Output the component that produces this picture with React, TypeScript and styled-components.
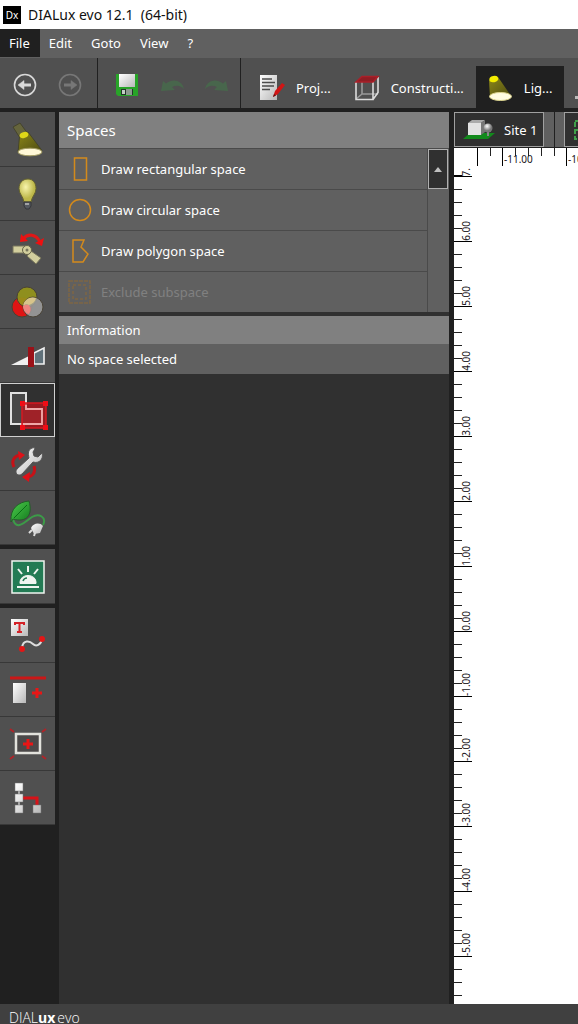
import React from 'react';
import styled, { createGlobalStyle, css } from 'styled-components';

const Global = createGlobalStyle`
  * { box-sizing: border-box; }
  html, body { margin: 0; background: #202020; }
  body { font-family: "Noto Sans", "Open Sans", sans-serif; font-size: 13px; color: #fff; }
  button { font: inherit; color: inherit; border: 0; padding: 0; background: none; cursor: pointer; }
  svg { display: block; flex: none; }
  ul { list-style: none; margin: 0; padding: 0; }
`;

const Window = styled.div`
  display: flex;
  flex-direction: column;
  height: 100vh;
  overflow: hidden;
`;

const TitleBar = styled.header`
  flex: none;
  display: flex;
  align-items: center;
  gap: 7px;
  height: 29px;
  padding-left: 3px;
  background: #fff;
  color: #111;
`;

const AppBadge = styled.span`
  display: flex;
  align-items: center;
  justify-content: center;
  width: 18px;
  height: 18px;
  background: #000;
  color: #fff;
  font-size: 10px;
`;

const Title = styled.h1`
  margin: 0;
  font: 400 14px/20px "Noto Sans", sans-serif;
  white-space: pre;
`;

const MenuBar = styled.nav`
  flex: none;
  display: flex;
  height: 29px;
  padding-bottom: 1px;
  background: #606060;
`;

const MenuItem = styled.button<{ $active?: boolean }>`
  padding: 0 10px 0 9px;
  background: ${p => (p.$active ? '#202020' : 'transparent')};
`;

const Toolbar = styled.div`
  flex: none;
  display: flex;
  height: 50px;
  background: #505050;
  overflow: hidden;
`;

const ToolGroup = styled.div<{ $start: number; $end: number }>`
  flex: none;
  display: flex;
  align-items: center;
  gap: 21px;
  padding: 4px ${p => p.$end}px 0 ${p => p.$start}px;
  border-right: 1px solid #202020;
`;

const ModeTabs = styled.div`
  flex: none;
  display: flex;
  align-items: flex-end;
  padding-left: 7px;
`;

const ModeTab = styled.button<{ $active?: boolean }>`
  flex: none;
  display: flex;
  align-items: center;
  gap: 11px;
  height: 42px;
  padding: 2px 12px 0 11px;
  background: ${p => (p.$active ? '#202020' : 'transparent')};
  white-space: nowrap;
`;

const Main = styled.main`
  flex: 1;
  min-height: 0;
  display: flex;
  margin-top: 4px;
`;

const Rail = styled.aside`
  flex: none;
  display: flex;
  flex-direction: column;
  gap: 4px;
  width: 59px;
  padding-right: 4px;
`;

const RailGroup = styled.div`
  padding-top: 1px;
  background: #505050;
`;

const RailButton = styled.button<{ $active?: boolean }>`
  display: flex;
  align-items: center;
  justify-content: center;
  width: 55px;
  height: 54px;
  border-bottom: 1px solid #383838;
  ${p => p.$active && css`
    background: #303030;
    border: 1px solid #d0d0d0;
  `}
`;

const SidePanel = styled.section`
  flex: none;
  display: flex;
  flex-direction: column;
  gap: 4px;
  width: 390px;
  background: #303030;
`;

const Card = styled.section`
  background: #606060;
`;

const CardTitle = styled.h2<{ $large?: boolean }>`
  margin: 0;
  padding-left: 8px;
  background: #808080;
  font-weight: 400;
  font-size: ${p => (p.$large ? 15 : 13)}px;
  line-height: ${p => (p.$large ? 36 : 28)}px;
`;

const CardText = styled.p`
  margin: 0;
  padding-left: 8px;
  line-height: 30px;
`;

const ListArea = styled.div`
  display: flex;
`;

const ToolList = styled.ul`
  flex: 1;
  border-right: 1px solid #4a4a4a;
`;

const ToolRow = styled.button`
  display: flex;
  align-items: center;
  gap: 9px;
  width: 100%;
  height: 41px;
  padding-left: 9px;
  border-top: 1px solid #4a4a4a;
  text-align: left;
  &:disabled { color: #808080; cursor: default; }
`;

const ScrollTrack = styled.div`
  width: 21px;
  border-top: 1px solid #4a4a4a;
`;

const ScrollUp = styled.button`
  display: flex;
  align-items: center;
  justify-content: center;
  width: 20px;
  height: 40px;
  border: 1px solid #b0b0b0;
  background: #303030;
`;

const Workspace = styled.section`
  flex: 1;
  min-width: 0;
  display: flex;
  flex-direction: column;
  margin-left: 5px;
  background: #fff;
  overflow: hidden;
`;

const ViewTabs = styled.div`
  flex: none;
  display: flex;
  height: 36px;
  background: #606060;
  border-bottom: 1px solid #202020;
`;

const ViewTab = styled.button`
  flex: none;
  display: flex;
  align-items: center;
  gap: 9px;
  padding: 0 6px 0 8px;
  border: 1px solid #a0a0a0;
  background: #303030;
  white-space: nowrap;
`;

const Divider = styled.span`
  flex: none;
  width: 11px;
  margin-right: 9px;
  border-right: 1px solid #202020;
`;

const TopRuler = styled.div`
  flex: none;
  display: flex;
  height: 19px;
  padding-left: 23px;
  color: #201420;
  font-size: 10px;
`;

const TopUnit = styled.div<{ $width: number }>`
  flex: none;
  width: ${p => p.$width}px;
  height: 18px;
  padding: 6px 0 0 1px;
  border-left: 1px solid #000;
  background: repeating-linear-gradient(90deg, transparent 0 12px, #222 12px 13px) 0 0 / 100% 8px no-repeat;
  line-height: 11px;
`;

const SideRuler = styled.div`
  flex: 1;
  min-height: 0;
  width: 18px;
  overflow: hidden;
  color: #201420;
  font-size: 10px;
`;

const SideUnit = styled.div<{ $first?: boolean; $bare?: boolean }>`
  display: flex;
  align-items: flex-start;
  justify-content: flex-end;
  flex-direction: column;
  height: ${p => (p.$first ? 10 : 65)}px;
  padding-left: 6px;
  border-bottom: ${p => (p.$bare ? 0 : 1)}px solid #000;
  background: ${p => p.$first ? 'linear-gradient(#000, #000) 0 100% / 8px 1px no-repeat' : 'repeating-linear-gradient(180deg, transparent 0 12px, #222 12px 13px) 0 0 / 8px 100% no-repeat'};
`;

const SideLabel = styled.span`
  writing-mode: vertical-rl;
  transform: rotate(180deg);
  line-height: 12px;
`;

const FirstUnits = styled.div`
  display: flex;
  flex-direction: column;
  justify-content: flex-end;
  height: 10px;
`;

const Footer = styled.footer`
  flex: none;
  height: 20px;
  padding: 4px 9px 0;
  background: #404040;
  overflow: hidden;
  font: 300 14px/20px "Open Sans", sans-serif;
  b { margin-right: 2px; font-weight: 700; }
`;

const Defs = () => (
  <svg width="0" height="0" style={{ position: 'absolute' }} aria-hidden="true">
    <defs>
      <linearGradient id="silver" x1="0" y1="0" x2="1" y2="1"><stop stopColor="#fff" /><stop offset="1" stopColor="#b8b8b8" /></linearGradient>
      <linearGradient id="beam" x1="0" y1="0" x2="1" y2="1"><stop stopColor="#8d8818" /><stop offset="1" stopColor="#4c4a12" /></linearGradient>
      <radialGradient id="glow" cx=".4" cy=".35"><stop stopColor="#f8f5ac" /><stop offset="1" stopColor="#bdb74a" /></radialGradient>
      <radialGradient id="ball" cx=".4" cy=".3"><stop stopColor="#fff" /><stop offset="1" stopColor="#777" /></radialGradient>
      <linearGradient id="leaf" x1="0" y1="0" x2="1" y2="1"><stop stopColor="#4cd04c" /><stop offset="1" stopColor="#14781e" /></linearGradient>
    </defs>
  </svg>
);

const Arrow = ({ dim, flip }: { dim?: boolean; flip?: boolean }) => (
  <svg width="24" height="24" viewBox="0 0 24 24" fill="none" stroke={dim ? '#777' : '#d8d8d8'} strokeWidth="1.6">
    <circle cx="12" cy="12" r="10.5" />
    <g transform={flip ? 'matrix(-1 0 0 1 24 0)' : undefined}>
      <path d="M18 12H9" strokeWidth="3" /><path d="M11 7.5 5 12l6 4.500Z" fill={dim ? '#777' : '#d8d8d8'} strokeWidth=".5" />
    </g>
  </svg>
);

const Save = () => (
  <svg width="24" height="24" viewBox="0 0 24 24">
    <path d="M1 1h22v22H3l-2-2Z" fill="#28a428" />
    <path d="M4 1h16v13H4Z" fill="url(#silver)" />
    <path d="M6 16h12v6H6Z" fill="#24352a" /><path d="M11 16h6v6h-6Z" fill="#8d9a90" /><path d="M7 17h3v4H7Z" fill="#c3ccc5" />
  </svg>
);

const Undo = ({ flip }: { flip?: boolean }) => (
  <svg width="24" height="16" viewBox="0 0 24 16">
    <g transform={flip ? 'matrix(-1 0 0 1 24 0)' : undefined}>
      <path d="M1 14 3 4l3 2.500C13 1 22 3 24 12c-4-4-8-4-12-2l3 3Z" fill="#48664c" />
    </g>
  </svg>
);

const Document = () => (
  <svg width="26" height="28" viewBox="0 0 26 28">
    <path d="M1 1h17v25H1Z" fill="url(#silver)" />
    <path d="M3 5h10M3 8.500h13M3 12h12M3 15.500h8" stroke="#4c4c4c" strokeWidth="1.4" />
    <path d="m23 9 3 2-7 9-5 3 2-6Z" fill="#d01515" /><path d="m15 20-1 3 3-1.500Z" fill="#631010" />
  </svg>
);

const Cube = () => (
  <svg width="26" height="28" viewBox="0 0 26 28" fill="none" stroke="#dcdcdc" strokeWidth="1.6">
    <path d="M8 8v12l-6 5M8 20h16" stroke="#999" />
    <path d="M2 8v17.500h17V8m0 17.500 5-7V3" />
    <path d="M2 8 8 2.500h16L19 8Z" fill="#8f1d24" stroke="#a91f28" />
  </svg>
);

const Spot = () => (
  <svg width="26" height="28" viewBox="0 0 26 28">
    <path d="M2 6 11 3l13 19-21 2Z" fill="url(#beam)" />
    <ellipse cx="7" cy="5" rx="4.500" ry="3.200" fill="#f4ec00" transform="rotate(-12 7 6)" />
    <ellipse cx="13.500" cy="22.500" rx="11" ry="4" fill="#fffce0" stroke="#ddd58e" />
  </svg>
);

const Luminaire = () => (
  <svg width="34" height="38" viewBox="0 0 34 38">
    <path d="m2 6 7-4 8 11-8 4Z" fill="#66653c" stroke="#45442c" />
    <path d="M8.500 15.500 17 11l14 18.500-24 2Z" fill="url(#beam)" stroke="#45442c" />
    <ellipse cx="13" cy="14" rx="4.500" ry="3" fill="#e0d818" transform="rotate(-20 13 14)" />
    <ellipse cx="19" cy="31" rx="12" ry="3.800" fill="#fff8d8" stroke="#a29b62" />
  </svg>
);

const Bulb = () => (
  <svg width="24" height="34" viewBox="0 0 24 34">
    <path d="M12 2C6 2 3 6.500 3 11.500 3 17 7 19 8 25h7c1-6 5-8 5-13.500C20 6.500 17.500 2 12 2Z" fill="url(#glow)" stroke="#65632f" />
    <path d="M8 25h7v4l-2 3h-3l-2-3Z" fill="#555960" stroke="#34363a" /><path d="M9 27h4" stroke="#bbb" strokeWidth="1.500" />
  </svg>
);

const Joint = () => (
  <svg width="36" height="34" viewBox="0 0 36 34">
    <path d="M13 8C18 2 26 3 30 11" fill="none" stroke="#e01818" strokeWidth="3" />
    <path d="m11 3-1 8 8-1Zm14 9 7 3 2-8Z" fill="#ee1010" />
    <path d="M3 15h12v7H3Zm18 5 10 7-5 6-9-8Z" fill="#d2ce9d" stroke="#77755c" />
    <circle cx="17" cy="19" r="4.500" fill="#d2ce9d" stroke="#646248" /><circle cx="17" cy="19" r="1.500" fill="#77755c" />
  </svg>
);

const Colors = () => (
  <svg width="36" height="34" viewBox="0 0 36 34" stroke="#4a4232">
    <circle cx="12" cy="22" r="10" fill="#e01414" />
    <circle cx="17" cy="12" r="10" fill="#95951a" opacity=".92" />
    <circle cx="23" cy="22" r="10" fill="#a4a4a4" opacity=".8" />
    <path d="M13 21c1-6 6-10 13-8-1 4-4 6-7 7-2-1-4-1-6 1Z" fill="#d8c48a" stroke="none" />
    <path d="M13 21c2-2 5-1 6-1 2 3 2 6 0 9-4-1-6-4-6-8Z" fill="#ee8580" stroke="none" />
  </svg>
);

const Dimmer = () => (
  <svg width="36" height="26" viewBox="0 0 36 26">
    <path d="m1 22 18-9v9Z" fill="#f0f0f0" /><path d="m24 10 10-5v16H24Z" fill="#60717a" stroke="#f0f0f0" strokeWidth="1.600" />
    <path d="M18 4h6v20h-6Z" fill="#9b1118" />
  </svg>
);

const SpacesIcon = () => (
  <svg width="40" height="40" viewBox="0 0 40 40">
    <path d="M3 3h15v16h16v15H3Z" fill="#484848" stroke="#e2e2e2" strokeWidth="2" />
    <path d="M14 13h24v25H14Z" fill="#c0141c" fillOpacity=".72" stroke="#d61820" strokeWidth="1.500" />
    <path d="M18 15v4h16v15H15" fill="none" stroke="#f0a8a8" strokeWidth="1.800" />
    <path d="M12 11h5v5h-5Zm23 0h5v5h-5ZM12 35h5v5h-5Zm23 0h5v5h-5Z" fill="#f00d16" />
  </svg>
);

const Wrench = () => (
  <svg width="36" height="38" viewBox="0 0 36 38">
    <path d="M4 22c-3-6 0-11 6-12M24 21c2 6-1 11-8 11" fill="none" stroke="#c51218" strokeWidth="3" />
    <path d="m8 6 7 4-6 5ZM20 27l-8 5 7 5Z" fill="#de1118" />
    <path d="M22 3c4-1 3 1 1 4l1 4 4 1 4-4c2 6-3 11-9 9L12 29c-4 3-8-1-5-5l12-11c-1-5-1-8 3-10Z" fill="url(#silver)" stroke="#555" />
  </svg>
);

const Eco = () => (
  <svg width="36" height="38" viewBox="0 0 36 38">
    <path d="M3 20c3 13 13 2 19-2 7-4 15 0 11 8" fill="none" stroke="#3c9b48" strokeWidth="2" />
    <path d="M1 22C0 10 8 3 19 2c4 14-2 22-16 18l-2 3Z" fill="url(#leaf)" stroke="#245c29" />
    <path d="M4 19 17 6" stroke="#087015" />
    <path d="M21 29c2-5 9-6 12-2l-3 7-6 1Z" fill="url(#silver)" /><path d="m22 31-3 3m6 0-1 3" stroke="#ddd" strokeWidth="2" />
  </svg>
);

const Alarm = () => (
  <svg width="34" height="34" viewBox="0 0 34 34" fill="none" stroke="#f0f5f0" strokeWidth="2">
    <path d="M1 1h32v32H1Z" fill="#237b54" strokeWidth="1.500" />
    <path d="M6 27h22" /><path d="M9 23.500V22a8 6.500 0 0 1 16 0v1.500Z" fill="#f0f5f0" strokeWidth="1" />
    <path d="M17 6v6M7 9l4 5M27 9l-4 5" /><path d="M12 21q1-3 4-3" stroke="#237b54" strokeWidth="1.500" />
  </svg>
);

const TextLine = () => (
  <svg width="36" height="36" viewBox="0 0 36 36">
    <path d="M1 1h17v17H1Z" fill="url(#silver)" />
    <path d="M5 7V5h9v2M9.500 5v9M7 14h5" fill="none" stroke="#d42127" strokeWidth="2" />
    <path d="M12 30c1-9 8-7 11-4s8 1 9-5" fill="none" stroke="#ddd" strokeWidth="2" />
    <circle cx="12" cy="31" r="3" fill="#e31616" /><circle cx="32" cy="21" r="3" fill="#e31616" />
  </svg>
);

const Plus = ({ x, y }: { x: number; y: number }) => <path d={`M${x - 5} ${y}h10M${x} ${y - 5}v10`} stroke="#e81616" strokeWidth="3" />;

const AddColumn = () => (
  <svg width="38" height="30" viewBox="0 0 38 30">
    <path d="M1 3h36" stroke="#ca1717" strokeWidth="3" /><path d="M4 8h13v20H4Z" fill="url(#silver)" /><Plus x={28} y={18} />
  </svg>
);

const AddFrame = () => (
  <svg width="38" height="32" viewBox="0 0 38 32" fill="none">
    <path d="M7 6h24v19H7Z" fill="#4b4848" stroke="#e2e2dc" strokeWidth="2.500" /><Plus x={19} y={16} />
    <path d="m1 1 4 3m32-3-4 3M1 31l4-3m32 3-4-3" stroke="#ad2529" strokeWidth="2" />
  </svg>
);

const Tree = () => (
  <svg width="30" height="32" viewBox="0 0 30 32">
    <path d="M6 4v24" stroke="#aaa" strokeWidth="2" /><path d="M9 16h15v7" fill="none" stroke="#d71218" strokeWidth="3" />
    <path d="M2 1h8v8H2Zm0 11h8v8H2Zm0 11h8v8H2Zm18 0h8v8h-8Z" fill="url(#silver)" stroke="#777" strokeWidth=".5" />
  </svg>
);

const Site = () => (
  <svg width="32" height="22" viewBox="0 0 32 22">
    <path d="m0 20 7-6h25l-7 6Z" fill="#128a1c" />
    <path d="M5 4h13v12H5Z" fill="#e2e2e2" /><path d="m5 4 4-3h13l-4 3Z" fill="#aaa" /><path d="m18 4 4-3v12l-4 3Z" fill="#777" />
    <path d="M25 12v5" stroke="#888" strokeWidth="2" /><circle cx="25" cy="9" r="4.500" fill="url(#ball)" />
  </svg>
);

const PlanIcon = () => (
  <svg width="24" height="22" viewBox="0 0 24 22" fill="none" stroke="#3fa04a" strokeWidth="2">
    <path d="M2 2h20v18H2Z" strokeDasharray="5 2" /><path d="M2 11h20" />
  </svg>
);

const shapes: Record<string, React.ReactNode> = {
  rect: <path d="M6.500 1h12v22h-12Z" />,
  circle: <circle cx="12" cy="12" r="10.500" />,
  polygon: <path d="M5 1h11l-3 7 7 7-5 8H5Z" />,
  exclude: <><path d="M1 1h21v22H1Z" strokeDasharray="4 1" /><path d="M5 5h13v14H5Z" strokeDasharray="3 2" /></>,
};

const tools = [
  { label: 'Draw rectangular space', shape: 'rect' },
  { label: 'Draw circular space', shape: 'circle' },
  { label: 'Draw polygon space', shape: 'polygon' },
  { label: 'Exclude subspace', shape: 'exclude', disabled: true },
];

const railGroups = [
  [
    { name: 'Luminaires', icon: <Luminaire /> },
    { name: 'Lamps', icon: <Bulb /> },
    { name: 'Joints', icon: <Joint /> },
    { name: 'Colour filters', icon: <Colors /> },
    { name: 'Light scenes', icon: <Dimmer /> },
    { name: 'Spaces', icon: <SpacesIcon />, active: true },
    { name: 'Maintenance', icon: <Wrench /> },
    { name: 'Energy', icon: <Eco /> },
  ],
  [{ name: 'Emergency lighting', icon: <Alarm /> }],
  [
    { name: 'Text and lines', icon: <TextLine /> },
    { name: 'Add column', icon: <AddColumn /> },
    { name: 'Add frame', icon: <AddFrame /> },
    { name: 'Structure', icon: <Tree /> },
  ],
];

const heights = [6, 5, 4, 3, 2, 1, 0, -1, -2, -3, -4, -5];

export default function App() {
  return (
    <Window>
      <Global />
      <Defs />
      <TitleBar>
        <AppBadge>Dx</AppBadge>
        <Title>{'DIALux evo 12.1  (64-bit)'}</Title>
      </TitleBar>
      <MenuBar>
        {['File', 'Edit', 'Goto', 'View', '?'].map((m, i) => <MenuItem key={m} $active={i === 0}>{m}</MenuItem>)}
      </MenuBar>
      <Toolbar>
        <ToolGroup $start={13} $end={15}>
          <button aria-label="Back"><Arrow /></button>
          <button aria-label="Forward" disabled><Arrow dim flip /></button>
        </ToolGroup>
        <ToolGroup $start={17} $end={11}>
          <button aria-label="Save"><Save /></button>
          <button aria-label="Undo" disabled><Undo /></button>
          <button aria-label="Redo" disabled><Undo flip /></button>
        </ToolGroup>
        <ModeTabs>
          <ModeTab><Document />Proj...</ModeTab>
          <ModeTab><Cube />Constructi...</ModeTab>
          <ModeTab $active><Spot />Lig...</ModeTab>
          <ModeTab aria-label="More"><svg width="20" height="28" viewBox="0 0 20 28"><path d="M0 22h18v3H0Z" fill="#bbb" /></svg></ModeTab>
        </ModeTabs>
      </Toolbar>
      <Main>
        <Rail>
          {railGroups.map((group, i) => (
            <RailGroup key={i}>
              {group.map(item => (
                <RailButton key={item.name} aria-label={item.name} $active={'active' in item && item.active}>{item.icon}</RailButton>
              ))}
            </RailGroup>
          ))}
        </Rail>
        <SidePanel>
          <Card>
            <CardTitle $large>Spaces</CardTitle>
            <ListArea>
              <ToolList>
                {tools.map(t => (
                  <li key={t.label}>
                    <ToolRow disabled={t.disabled}>
                      <svg width="24" height="24" viewBox="0 0 24 24" fill="none" stroke={t.disabled ? '#7d6544' : '#d38a1c'} strokeWidth="1.500">{shapes[t.shape]}</svg>
                      {t.label}
                    </ToolRow>
                  </li>
                ))}
              </ToolList>
              <ScrollTrack>
                <ScrollUp aria-label="Scroll up"><svg width="8" height="5" viewBox="0 0 8 5"><path d="m4 0 4 5H0Z" fill="#c0c0c0" /></svg></ScrollUp>
              </ScrollTrack>
            </ListArea>
          </Card>
          <Card>
            <CardTitle>Information</CardTitle>
            <CardText>No space selected</CardText>
          </Card>
        </SidePanel>
        <Workspace>
          <ViewTabs>
            <ViewTab><Site />Site 1</ViewTab>
            <Divider />
            <ViewTab aria-label="Plan view"><PlanIcon /></ViewTab>
          </ViewTabs>
          <TopRuler>
            <TopUnit $width={25} />
            <TopUnit $width={64}>-11.00</TopUnit>
            <TopUnit $width={64}>-10.00</TopUnit>
          </TopRuler>
          <SideRuler>
            <FirstUnits>
              <SideUnit $first><SideLabel>7.</SideLabel></SideUnit>
            </FirstUnits>
            {heights.map(h => <SideUnit key={h}><SideLabel>{h.toFixed(2)}</SideLabel></SideUnit>)}
            <SideUnit $bare />
          </SideRuler>
        </Workspace>
      </Main>
      <Footer>DIAL<b>ux</b>evo</Footer>
    </Window>
  );
}
